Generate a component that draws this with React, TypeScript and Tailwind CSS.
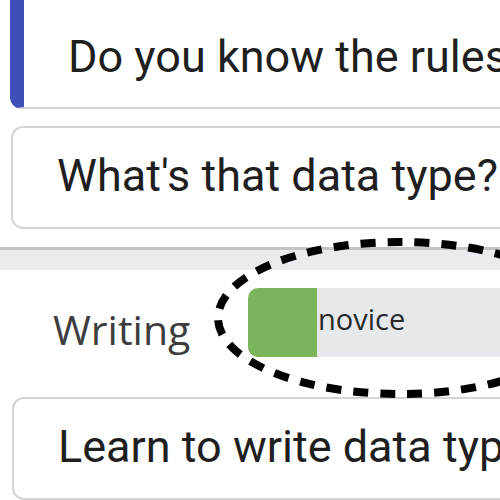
import React from "react";

const cardText = "font-['Roboto',sans-serif] text-[45px] leading-[52px] text-[#1f1f1f] whitespace-nowrap";

export default function App() {
  return (
    <div className="relative w-[500px] h-[500px] overflow-hidden bg-white">
      <div className="w-[700px] pr-4">
        {/* question cards */}
        <div className="pl-[10px] -mt-[20px]">
          <div className="rounded-[12px] border-2 border-l-[14px] border-[#d4d4d4] border-l-[#3f4fb8] pl-[44px] pt-[49px] pb-[24px]">
            <p className={cardText}>Do you know the rules of data types?</p>
          </div>
        </div>
        <div className="pl-[11px] mt-[17px]">
          <div className="rounded-[12px] border-2 border-[#d4d4d4] pl-[44px] pt-[22px] pb-[25px]">
            <p className={cardText}>What's that data type?</p>
          </div>
        </div>

        {/* section divider */}
        <div className="mt-[18px] h-[3px] bg-[#c4c4c4]" />
        <div className="h-[20px] bg-[#e9ebee]" />

        {/* skill row */}
        <div className="flex items-center pl-[53px] pt-[18px]">
          <span className="w-[195px] pt-[7px] -mb-[7px] font-['Open_Sans',sans-serif] text-[41px] leading-[69px] text-[#3d3d3d]">
            Writing
          </span>
          <div className="flex h-[69px] flex-1 items-center rounded-l-[10px] bg-[#e6e8eb]">
            <div className="h-full w-[69px] rounded-l-[10px] bg-[#7bb45a]" />
            <span className="ml-[1px] -mt-[8px] font-['Open_Sans',sans-serif] text-[29px] leading-[69px] text-[#2a2a2a]">
              novice
            </span>
          </div>
        </div>

        <div className="pl-[12px] mt-[40px]">
          <div className="rounded-[12px] border-2 border-[#d4d4d4] pl-[44px] pt-[22px] pb-[25px]">
            <p className={cardText}>Learn to write data types</p>
          </div>
        </div>
      </div>

      {/* dashed annotation ellipse */}
      <svg className="absolute left-0 top-0 pointer-events-none" width="500" height="500">
        <ellipse
          cx="400"
          cy="318"
          rx="182"
          ry="76"
          fill="none"
          stroke="#000"
          strokeWidth="8"
          strokeDasharray="15 12"
        />
      </svg>
    </div>
  );
}
